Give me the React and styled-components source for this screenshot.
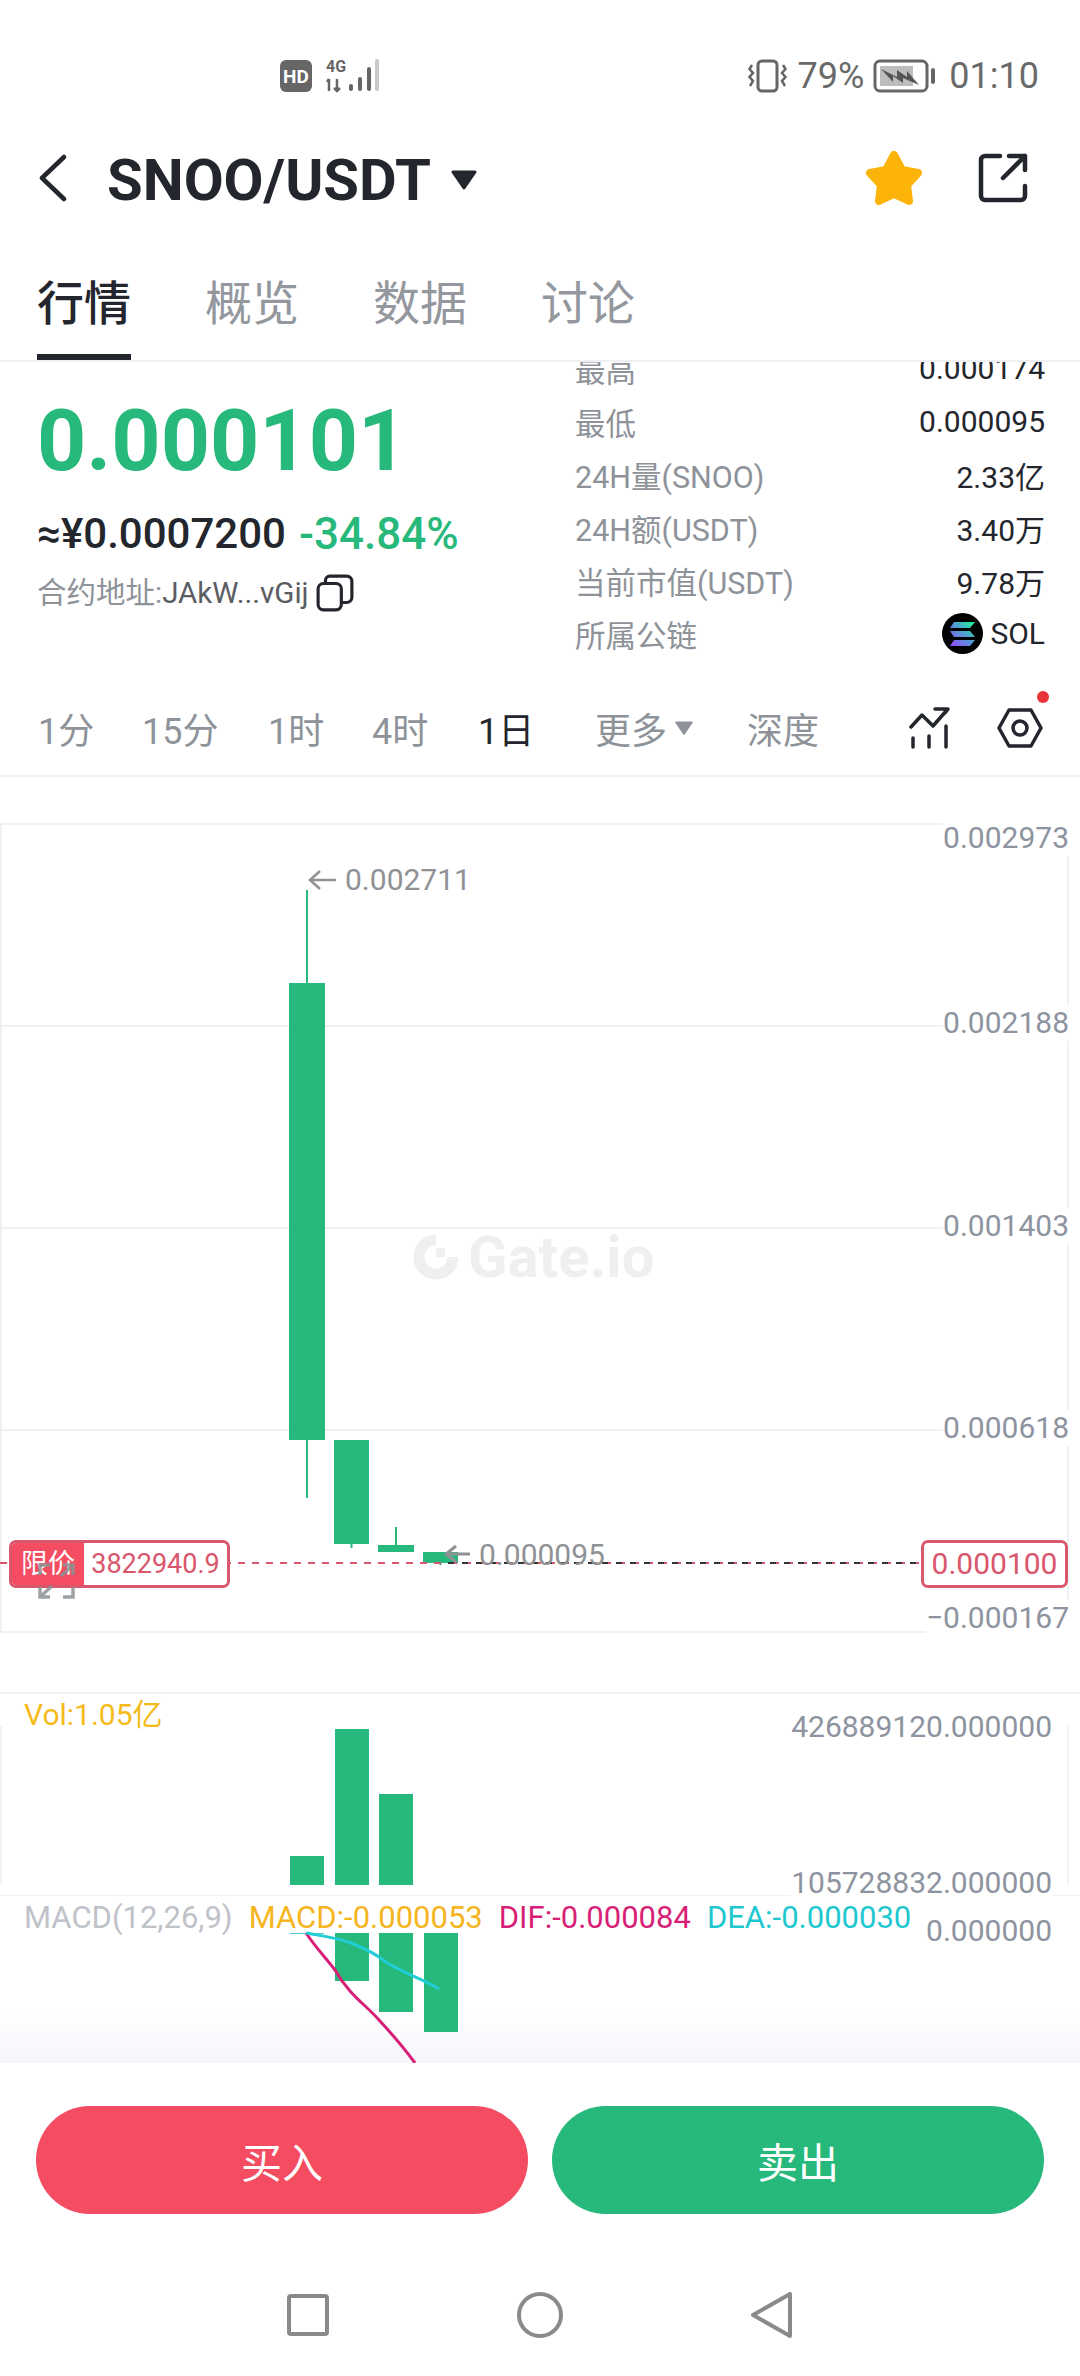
import styled, { createGlobalStyle } from 'styled-components';

const GREEN = '#27b97c';
const RED = '#f44c61';
const TAG_RED = '#d9566c';
const DARK = '#23262c';
const GREY = '#8e9299';
const AXIS = '#8e93a0';
const LINE = '#ebecee';
const FONT = `Roboto, "Noto Sans CJK SC", sans-serif`;

const GlobalStyle = createGlobalStyle`
  html, body {
    margin: 0;
    padding: 0;
    background: #fff;
  }
  body {
    font-family: ${FONT};
  }
`;

const Page = styled.div`
  width: 1080px;
  height: 2376px;
  overflow: hidden;
  background: #fff;
  color: ${DARK};
`;

const StatusBar = styled.div`
  height: 126px;
  padding: 26px 41px 0 280px;
  box-sizing: border-box;
  display: flex;
  align-items: center;
  color: #6a6a6a;
  font-size: 36px;
`;

const HdBadge = styled.div`
  width: 32px;
  height: 32px;
  border-radius: 6px;
  background: #666;
  color: #fff;
  font-size: 19px;
  font-weight: 700;
  display: flex;
  align-items: center;
  justify-content: center;
`;

const SignalIcon = styled.svg`
  margin-left: 14px;
`;

const StatusRight = styled.div`
  margin-left: auto;
  display: flex;
  align-items: center;
`;

const StatusText = styled.span`
  margin-left: ${(p) => p.$gap}px;
  line-height: 40px;
`;

const BatteryIcon = styled.svg`
  margin-left: 9px;
`;

const Header = styled.div`
  height: 104px;
  padding: 0 52px 0 38px;
  display: flex;
  align-items: center;
`;

const Title = styled.h1`
  margin: 4px 0 0 39px;
  font-size: 58px;
  font-weight: 700;
  line-height: 60px;
  color: ${DARK};
`;

const Caret = styled.svg`
  margin-left: ${(p) => p.$gap}px;
  margin-top: ${(p) => p.$top || 0}px;
`;

const StarIcon = styled.svg`
  margin-left: auto;
`;

const ShareIcon = styled.svg`
  margin-left: 55px;
`;

const Tabs = styled.div`
  height: 132px;
  box-sizing: border-box;
  padding: 0 37px;
  display: flex;
  gap: 74px;
  border-bottom: 2px solid #f0f0f2;
`;

const Tab = styled.div`
  width: 94px;
  height: 130px;
  box-sizing: border-box;
  padding-top: 47px;
  font-size: 47px;
  line-height: 54px;
  white-space: nowrap;
  font-weight: ${(p) => (p.$active ? 500 : 400)};
  color: ${(p) => (p.$active ? DARK : '#94989e')};
  border-bottom: 6px solid ${(p) => (p.$active ? DARK : 'transparent')};
`;

const Info = styled.div`
  height: 319px;
  overflow: hidden;
  padding: 0 35px 0 37px;
  display: flex;
  justify-content: space-between;
`;

const Summary = styled.div`
  padding-top: 36px;
`;

const BigPrice = styled.div`
  font-size: 86px;
  font-weight: 700;
  line-height: 86px;
  color: ${GREEN};
`;

const SubPrice = styled.div`
  margin-top: 25px;
  display: flex;
  align-items: center;
  gap: 13px;
  font-size: 42px;
  font-weight: 500;
  line-height: 50px;
`;

const Change = styled.span`
  color: ${GREEN};
  font-size: 44px;
`;

const Contract = styled.div`
  margin-top: 14px;
  display: flex;
  align-items: center;
  gap: 7px;
  font-size: 29.5px;
  line-height: 40px;
  color: ${GREY};
`;

const ContractCode = styled.span`
  color: #5a5d63;
`;

const Stats = styled.div`
  width: 470px;
  margin-top: -20px;
`;

const StatRow = styled.div`
  height: 53px;
  display: flex;
  justify-content: space-between;
  align-items: center;
  font-size: 30px;
`;

const StatLabel = styled.span`
  color: ${GREY};
  font-size: 30.5px;
`;

const StatValue = styled.span`
  display: flex;
  align-items: center;
  gap: 7px;
`;

const Intervals = styled.div`
  height: 94px;
  border-bottom: 2px solid #f0f0f2;
  padding: 0 37px 0 38px;
  display: flex;
  align-items: center;
  font-size: 36px;
  color: ${GREY};
`;

const Interval = styled.span`
  width: ${(p) => p.$width}px;
  white-space: nowrap;
  color: ${(p) => (p.$active ? DARK : GREY)};
`;

const MoreButton = styled.span`
  width: 152px;
  display: flex;
  align-items: center;
`;

const IntervalIcons = styled.div`
  margin-left: auto;
  display: flex;
  align-items: center;
  gap: 47px;
`;

const HexWrap = styled.div`
  position: relative;
  height: 42px;
`;

const RedDot = styled.span`
  position: absolute;
  top: -16px;
  right: -6px;
  width: 12px;
  height: 12px;
  border-radius: 50%;
  background: #e8333a;
`;

const ChartPanel = styled.div`
  position: relative;
  height: ${(p) => p.$height}px;
  margin-top: ${(p) => p.$top || 0}px;
`;

const MacdPanel = styled(ChartPanel)`
  background: linear-gradient(#fff 68%, #f5f6fb 100%);
`;

const Canvas = styled.svg`
  position: absolute;
  left: 0;
  top: 0;
`;

const AxisLabel = styled.span`
  position: absolute;
  right: ${(p) => p.$right}px;
  top: ${(p) => p.$top}px;
  font-size: 30px;
  line-height: 36px;
  background: #fff;
  color: ${AXIS};
`;

const PeakLabel = styled.span`
  position: absolute;
  left: ${(p) => p.$left}px;
  top: ${(p) => p.$top}px;
  font-size: 30px;
  line-height: 36px;
  color: #8f9194;
`;

const Watermark = styled.div`
  position: absolute;
  left: 413px;
  top: 406px;
  display: flex;
  align-items: center;
  gap: 9px;
  font-size: 58px;
  font-weight: 700;
  line-height: 56px;
  color: #eeeff0;
`;

const OrderTag = styled.div`
  position: absolute;
  left: 9px;
  top: 717px;
  width: 221px;
  height: 48px;
  box-sizing: border-box;
  display: flex;
  border: 3px solid ${TAG_RED};
  border-radius: 7px;
  overflow: hidden;
  background: #fff;
`;

const OrderType = styled.span`
  width: 72px;
  background: ${RED};
  color: #fff;
  font-size: 27px;
  line-height: 42px;
  text-align: center;
`;

const OrderAmount = styled.span`
  flex: 1;
  color: ${TAG_RED};
  font-size: 27px;
  line-height: 42px;
  text-align: center;
`;

const PriceTag = styled.div`
  position: absolute;
  left: 921px;
  top: 717px;
  width: 147px;
  height: 48px;
  box-sizing: border-box;
  border: 3px solid ${TAG_RED};
  border-radius: 7px;
  background: #fff;
  color: ${TAG_RED};
  font-size: 30px;
  line-height: 42px;
  text-align: center;
`;

const ExpandIcon = styled.svg`
  position: absolute;
  left: 38px;
  top: 740px;
`;

const VolLabel = styled.span`
  position: absolute;
  left: 24px;
  top: 5px;
  font-size: 30px;
  line-height: 36px;
  color: #f5bb1a;
`;

const MacdLegend = styled.div`
  position: absolute;
  left: 24px;
  top: 4px;
  display: flex;
  gap: 16px;
  font-size: 31px;
  line-height: 36px;
  white-space: nowrap;
`;

const LegendItem = styled.span`
  color: ${(p) => p.$color};
`;

const Actions = styled.div`
  padding: 43px 36px 0 36px;
  display: flex;
  gap: 24px;
`;

const TradeButton = styled.button`
  flex: 1;
  height: 108px;
  border: 0;
  border-radius: 54px;
  background: ${(p) => p.$color};
  color: #fff;
  font-family: ${FONT};
  font-size: 41px;
`;

const NavBar = styled.div`
  padding: 78px 0 0;
  display: flex;
  justify-content: center;
  gap: 188px;
`;

const priceLabels = [
  ['0.002973', -3],
  ['0.002188', 182],
  ['0.001403', 385],
  ['0.000618', 587],
  ['−0.000167', 777],
];

// x, width, body top, body bottom, wick top, wick bottom
const candles = [
  [289, 36, 160, 617, 67, 675],
  [334, 35, 617, 721, 617, 725],
  [378, 36, 722, 729, 704, 729],
  [423, 35, 729, 740, 729, 742],
];

const volumeBars = [
  [290, 164],
  [335, 37],
  [379, 102],
];

const macdBars = [
  [290, 1],
  [335, 48],
  [379, 79],
  [424, 99],
];

const Chevron = () => (
  <svg width="30" height="48" viewBox="0 0 30 48" fill="none" stroke={DARK} strokeWidth="4.5" strokeLinecap="round" strokeLinejoin="round">
    <path d="M26 3 L4 24 L26 45" />
  </svg>
);

const Triangle = ({ width, height, color, gap, top }) => (
  <Caret $gap={gap} $top={top} width={width} height={height} viewBox="0 0 26 20">
    <path d="M2 2 H24 L13 18 Z" fill={color} stroke={color} strokeWidth="3" strokeLinejoin="round" />
  </Caret>
);

const CopyIcon = () => (
  <svg width="38" height="38" viewBox="0 0 36 36" fill="none" stroke={DARK} strokeWidth="3" strokeLinejoin="round">
    <rect x="2" y="9" width="22" height="25" rx="5" />
    <path d="M9 8 V6 a4 4 0 0 1 4 -4 H29 a5 5 0 0 1 5 5 V22 a5 5 0 0 1 -5 5 H25" />
  </svg>
);

const SolIcon = () => (
  <svg width="41" height="41" viewBox="0 0 41 41">
    <defs>
      <linearGradient id="sol" x1="0" y1="1" x2="1" y2="0">
        <stop offset="0" stopColor="#9945ff" />
        <stop offset="0.55" stopColor="#4f9fd0" />
        <stop offset="1" stopColor="#19fb9b" />
      </linearGradient>
    </defs>
    <circle cx="20.5" cy="20.5" r="20.5" fill="#000" />
    <path d="M12 9 H33 L28 15 H8 Z M8 18 H28 L33 24 H12 Z M12 27 H33 L28 33 H8 Z" fill="url(#sol)" />
  </svg>
);

const App = () => (
  <Page>
    <GlobalStyle />
    <StatusBar>
      <HdBadge>HD</HdBadge>
      <SignalIcon width="56" height="36" viewBox="0 0 56 36">
        <text x="0" y="14" fontFamily="Roboto" fontSize="16" fontWeight="700" fill="#666">4G</text>
        <path d="M3 33 V21 M1 24 L3 21 M11 21 V33 M8 30 L11 33 L14 30" stroke="#666" strokeWidth="2.5" fill="none" />
        <rect x="23" y="26" width="4" height="7" rx="2" fill="#666" />
        <rect x="32" y="19" width="4" height="14" rx="2" fill="#666" />
        <rect x="41" y="9" width="4" height="24" rx="2" fill="#666" />
        <rect x="49" y="1" width="4" height="32" rx="2" fill="#c9c9c9" />
      </SignalIcon>
      <StatusRight>
        <svg width="40" height="34" viewBox="0 0 40 34" fill="none" stroke="#666" strokeWidth="3">
          <rect x="10" y="2" width="19" height="30" rx="4" />
          <path d="M4 6 L1.5 10 L5 14 L1.5 18 L5 22 L2 27" strokeWidth="2.5" />
          <path d="M35 6 L37.5 10 L34 14 L37.5 18 L34 22 L37 27" strokeWidth="2.5" />
        </svg>
        <StatusText $gap={10}>79%</StatusText>
        <BatteryIcon width="63" height="34" viewBox="0 0 63 34">
          <rect x="2" y="2" width="52" height="30" rx="5" fill="none" stroke="#666" strokeWidth="3" />
          <rect x="7" y="7" width="33" height="20" fill="#bdbdbd" />
          <path d="M8 10 L24 18 L24 11 L34 18 L34 12 L46 26 L30 19 L30 24 L20 17 L20 23 Z" fill="#555" />
          <rect x="58" y="9" width="4" height="16" rx="2" fill="#666" />
        </BatteryIcon>
        <StatusText $gap={13}>01:10</StatusText>
      </StatusRight>
    </StatusBar>

    <Header>
      <Chevron />
      <Title>SNOO/USDT</Title>
      <Triangle width={26} height={20} color={DARK} gap={20} top={4} />
      <StarIcon width="58" height="56" viewBox="0 0 58 56">
        <path d="M29 5 L37 20 L53 23 L42 35 L44 51 L29 44 L14 51 L16 35 L5 23 L21 20 Z" fill="#fdb40a" stroke="#fdb40a" strokeWidth="8" strokeLinejoin="round" />
      </StarIcon>
      <ShareIcon width="50" height="50" viewBox="0 0 50 50" fill="none" stroke={DARK} strokeWidth="4.5" strokeLinecap="round" strokeLinejoin="round">
        <path d="M22 3 H7 a4 4 0 0 0 -4 4 V43 a4 4 0 0 0 4 4 H43 a4 4 0 0 0 4 -4 V33" />
        <path d="M25 25 L47 3 M31 3 H47 V17" />
      </ShareIcon>
    </Header>

    <Tabs>
      <Tab $active>行情</Tab>
      <Tab>概览</Tab>
      <Tab>数据</Tab>
      <Tab>讨论</Tab>
    </Tabs>

    <Info>
      <Summary>
        <BigPrice>0.000101</BigPrice>
        <SubPrice>
          <span>≈¥0.0007200</span>
          <Change>-34.84%</Change>
        </SubPrice>
        <Contract>
          <span>
            合约地址:<ContractCode>JAkW...vGij</ContractCode>
          </span>
          <CopyIcon />
        </Contract>
      </Summary>
      <Stats>
        <StatRow><StatLabel>最高</StatLabel><StatValue>0.000174</StatValue></StatRow>
        <StatRow><StatLabel>最低</StatLabel><StatValue>0.000095</StatValue></StatRow>
        <StatRow><StatLabel>24H量(SNOO)</StatLabel><StatValue>2.33亿</StatValue></StatRow>
        <StatRow><StatLabel>24H额(USDT)</StatLabel><StatValue>3.40万</StatValue></StatRow>
        <StatRow><StatLabel>当前市值(USDT)</StatLabel><StatValue>9.78万</StatValue></StatRow>
        <StatRow><StatLabel>所属公链</StatLabel><StatValue><SolIcon />SOL</StatValue></StatRow>
      </Stats>
    </Info>

    <Intervals>
      <Interval $width={104}>1分</Interval>
      <Interval $width={126}>15分</Interval>
      <Interval $width={104}>1时</Interval>
      <Interval $width={106}>4时</Interval>
      <Interval $width={117} $active>1日</Interval>
      <MoreButton>
        更多
        <Triangle width={18} height={14} color={GREY} gap={8} />
      </MoreButton>
      <Interval $width={72}>深度</Interval>
      <IntervalIcons>
        <svg width="41" height="42" viewBox="0 0 41 42" fill="none" stroke={DARK} strokeWidth="3.5" strokeLinecap="round" strokeLinejoin="round">
          <path d="M2 20 L13 8 L24 19 L38 3 M26 2 H39 L36 6" />
          <path d="M4 31 V40 M20 29 V40 M37 19 V40" />
        </svg>
        <HexWrap>
          <svg width="46" height="42" viewBox="0 0 46 42" fill="none" stroke={DARK} strokeWidth="3.5" strokeLinejoin="round">
            <path d="M2 21 L12 3 H34 L44 21 L34 39 H12 Z" />
            <circle cx="23" cy="21" r="7" />
          </svg>
          <RedDot />
        </HexWrap>
      </IntervalIcons>
    </Intervals>

    <ChartPanel $top={46} $height={810}>
      <Canvas width="1080" height="810" viewBox="0 0 1080 810">
        {[1, 203, 405, 607, 809].map((y) => (
          <line key={y} x1="0" x2="1068" y1={y} y2={y} stroke={LINE} strokeWidth="1.5" />
        ))}
        <line x1="1" x2="1" y1="0" y2="810" stroke={LINE} strokeWidth="1.5" />
        <line x1="1068" x2="1068" y1="0" y2="810" stroke={LINE} strokeWidth="1.5" />
      </Canvas>
      <Watermark>
        <svg width="46" height="46" viewBox="0 0 46 46" fill="none">
          <path d="M23 6 A17 17 0 1 0 40 23" stroke="#eeeff0" strokeWidth="11" />
          <rect x="23" y="14" width="9" height="9" fill="#eeeff0" />
        </svg>
        Gate.io
      </Watermark>
      {priceLabels.map(([text, top]) => (
        <AxisLabel key={text} $right={11} $top={top}>{text}</AxisLabel>
      ))}
      <Canvas width="1080" height="810" viewBox="0 0 1080 810">
        {candles.map(([x, w, top, bottom, wickTop, wickBottom]) => (
          <g key={x} fill={GREEN}>
            <rect x={x} y={top} width={w} height={bottom - top} />
            <rect x={x + w / 2 - 1} y={wickTop} width="2" height={wickBottom - wickTop} />
          </g>
        ))}
        <line x1="0" x2="448" y1="740" y2="740" stroke={TAG_RED} strokeWidth="2" strokeDasharray="7 7" />
        <line x1="448" x2="921" y1="740" y2="740" stroke="#333" strokeWidth="2" strokeDasharray="6 8" />
        <line x1="448" x2="921" y1="740" y2="740" stroke={TAG_RED} strokeWidth="2" strokeDasharray="3 11" strokeDashoffset="-6" />
        <path d="M336 57 H311 M320 48 L310 57 L320 66" fill="none" stroke="#8f9194" strokeWidth="2.5" />
        <path d="M470 731 H447 M456 723 L446 731 L456 739" fill="none" stroke="#8f9194" strokeWidth="3" />
      </Canvas>
      <PeakLabel $left={345} $top={39}>0.002711</PeakLabel>
      <PeakLabel $left={479} $top={714}>0.000095</PeakLabel>
      <OrderTag>
        <OrderType>限价</OrderType>
        <OrderAmount>3822940.9</OrderAmount>
      </OrderTag>
      <PriceTag>0.000100</PriceTag>
      <ExpandIcon width="37" height="36" viewBox="0 0 37 36" fill="none" stroke="#8e9296" strokeWidth="3.5" opacity="0.85">
        <path d="M2 12 V2 H12 M25 2 H35 V12 M35 2 L23 13 M2 34 L14 23 M2 24 V34 H12 M25 34 H35 V24" />
      </ExpandIcon>
    </ChartPanel>

    <ChartPanel $top={59} $height={204}>
      <Canvas width="1080" height="204" viewBox="0 0 1080 204">
        <line x1="0" x2="1080" y1="1" y2="1" stroke={LINE} strokeWidth="1.5" />
        <line x1="0" x2="1080" y1="204" y2="204" stroke={LINE} strokeWidth="1.5" />
        <line x1="1" x2="1" y1="34" y2="193" stroke="#f0f0f2" strokeWidth="1.5" />
        <line x1="1068" x2="1068" y1="34" y2="193" stroke="#f0f0f2" strokeWidth="1.5" />
        {volumeBars.map(([x, top]) => (
          <rect key={x} x={x} y={top} width="34" height={193 - top} fill={GREEN} />
        ))}
      </Canvas>
      <VolLabel>Vol:1.05亿</VolLabel>
      <AxisLabel $right={28} $top={17}>426889120.000000</AxisLabel>
      <AxisLabel $right={28} $top={173}>105728832.000000</AxisLabel>
    </ChartPanel>

    <MacdPanel $height={167}>
      <Canvas width="1080" height="167" viewBox="0 0 1080 167">
        {macdBars.map(([x, h]) => (
          <rect key={x} x={x} y="37" width="34" height={h} fill={x === 290 ? '#4fc7d0' : GREEN} />
        ))}
        <path d="M306 37 C316 52 326 62 335 74 C350 100 365 108 379 124 C392 138 404 152 415 167" fill="none" stroke="#d81f77" strokeWidth="3" />
        <path d="M306 37 C322 40 338 42 351 47 C364 52 376 58 386 66 C405 78 423 83 439 93" fill="none" stroke="#22cdd6" strokeWidth="3" />
      </Canvas>
      <MacdLegend>
        <LegendItem $color="#bfc2c8">MACD(12,26,9)</LegendItem>
        <LegendItem $color="#f5b51f">MACD:-0.000053</LegendItem>
        <LegendItem $color="#d81f77">DIF:-0.000084</LegendItem>
        <LegendItem $color="#1fc8cf">DEA:-0.000030</LegendItem>
      </MacdLegend>
      <AxisLabel $right={28} $top={17}>0.000000</AxisLabel>
    </MacdPanel>

    <Actions>
      <TradeButton $color={RED}>买入</TradeButton>
      <TradeButton $color={GREEN}>卖出</TradeButton>
    </Actions>

    <NavBar>
      <svg width="42" height="46" viewBox="0 0 42 46" fill="none" stroke="#8a8a8a" strokeWidth="4" strokeLinejoin="round">
        <rect x="2" y="4" width="38" height="38" rx="2" />
      </svg>
      <svg width="46" height="46" viewBox="0 0 46 46" fill="none" stroke="#8a8a8a" strokeWidth="4">
        <circle cx="23" cy="23" r="21" />
      </svg>
      <svg width="42" height="46" viewBox="0 0 42 46" fill="none" stroke="#8a8a8a" strokeWidth="4" strokeLinejoin="round">
        <path d="M39 2 V44 L2 23 Z" />
      </svg>
    </NavBar>
  </Page>
);

export default App;
